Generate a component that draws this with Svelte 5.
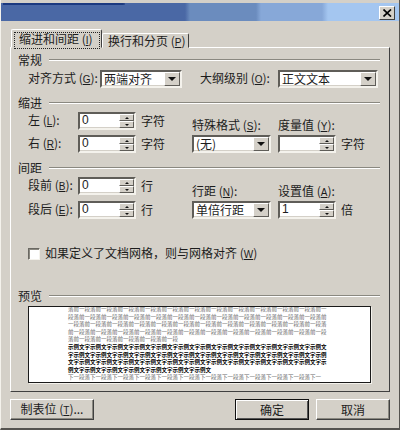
<script>
  const prev = '落前一段' + '落前一段'.repeat(60);
  const sample = '示例文字'.repeat(60);
  const next = '下一段落'.repeat(30);
</script>

{#snippet spin(value)}
  <div class="sunken spinner">
    <span class="value">{value}</span>
    <span class="arrows">
      <span class="arrow"><i class="up"></i></span>
      <span class="arrow"><i class="down"></i></span>
    </span>
  </div>
{/snippet}

{#snippet pick(value, cls)}
  <div class="sunken select {cls}">
    <span class="value">{value}</span>
    <span class="drop"><i class="down big"></i></span>
  </div>
{/snippet}

<div class="window">
  <div class="titlebar">
    <button class="close" aria-label="关闭">
      <svg width="9" height="8" viewBox="0 0 9 8"><path d="M0.5 0.5 L8 7.5 M8 0.5 L0.5 7.5" stroke="#000" stroke-width="1.7" fill="none"/></svg>
    </button>
  </div>

  <div class="tabs">
    <div class="tab active"><span class="focus">缩进和间距 (<u>I</u>)</span></div>
    <div class="tab">换行和分页 (<u>P</u>)</div>
  </div>

  <div class="panel">
    <div class="legend first"><span>常规</span><hr /></div>
    <div class="row general">
      <span class="lab w72">对齐方式 (<u>G</u>):</span>
      {@render pick('两端对齐', 'w82')}
      <span class="lab outline">大纲级别 (<u>O</u>):</span>
      {@render pick('正文文本', 'w100')}
    </div>

    <div class="legend"><span>缩进</span><hr /></div>
    <div class="group">
      <div class="left">
        <div class="row"><span class="lab w50">左 (<u>L</u>):</span>{@render spin('0')}<span class="suffix">字符</span></div>
        <div class="row"><span class="lab w50">右 (<u>R</u>):</span>{@render spin('0')}<span class="suffix">字符</span></div>
      </div>
      <div class="right">
        <div class="field">
          <span class="cap">特殊格式 (<u>S</u>):</span>
          {@render pick('(无)', 'w79')}
        </div>
        <div class="field">
          <span class="cap">度量值 (<u>Y</u>):</span>
          <div class="row">{@render spin('')}<span class="suffix">字符</span></div>
        </div>
      </div>
    </div>

    <div class="legend"><span>间距</span><hr /></div>
    <div class="group">
      <div class="left wide">
        <div class="row"><span class="lab w50">段前 (<u>B</u>):</span>{@render spin('0')}<span class="suffix">行</span></div>
        <div class="row"><span class="lab w50">段后 (<u>E</u>):</span>{@render spin('0')}<span class="suffix">行</span></div>
      </div>
      <div class="right">
        <div class="field">
          <span class="cap">行距 (<u>N</u>):</span>
          {@render pick('单倍行距', 'w79')}
        </div>
        <div class="field">
          <span class="cap">设置值 (<u>A</u>):</span>
          <div class="row">{@render spin('1')}<span class="suffix">倍</span></div>
        </div>
      </div>
    </div>

    <div class="check">
      <span class="box"></span>
      <span>如果定义了文档网格，则与网格对齐 (<u>W</u>)</span>
    </div>

    <div class="legend preview-legend"><span>预览</span><hr /></div>
    <div class="preview">
      <div class="sheet">
        <p class="grey">{prev.slice(0, 208)}</p>
        <p class="bold">{sample.slice(0, 167)}</p>
        <p class="grey">{next.slice(0, 46)}</p>
      </div>
    </div>
  </div>

  <div class="buttons">
    <button class="btn tabstop">制表位 (<u>T</u>)...</button>
    <span class="spacer"></span>
    <button class="btn default">确定</button>
    <button class="btn cancel">取消</button>
  </div>
</div>

<style>
  :global(body) {
    margin: 0;
    background: #d4d0c8;
  }
  .window {
    width: 400px;
    height: 430px;
    box-sizing: border-box;
    background: #d4d0c8;
    border-left: 1px solid #f4f2ec;
    border-right: 1px solid #55534f;
    border-bottom: 2px solid #55534f;
    padding-top: 3px;
    font-family: "Noto Sans CJK SC", "Liberation Sans", sans-serif;
    font-size: 12px;
    line-height: 14px;
    color: #1c1c1c;
    overflow: hidden;
  }
  u {
    font-family: "Liberation Sans", sans-serif;
    font-size: 10px;
  }
  .titlebar {
    height: 18px;
    margin-left: -1px;
    margin-right: -1px;
    background:
      linear-gradient(90deg, #1c3a80 0, #1c3a80 120px, #4a68a5 124px) no-repeat 3px 0 / 122px 2px,
      linear-gradient(90deg, #4a68a5 0, #4a68a5 185px, #6b8cbe 190px, #6b8cbe 256px, #87a8d8 261px, #87a8d8 322px, #a4c6f0 328px);
    box-sizing: border-box;
    display: flex;
    justify-content: flex-end;
    align-items: center;
    padding-right: 5px;
  }
  .close {
    width: 16px;
    height: 14px;
    padding: 0;
    margin-top: 1px;
    background: #d4d0c8;
    border: 1px solid;
    border-color: #fff #404040 #404040 #fff;
    display: flex;
    align-items: center;
    justify-content: center;
  }
  .tabs {
    display: flex;
    align-items: flex-end;
    height: 27px;
    padding-left: 10px;
    position: relative;
    z-index: 1;
    margin-bottom: -1px;
  }
  .tab {
    height: 15px;
    width: 87px;
    box-sizing: border-box;
    white-space: nowrap;
    background: #d4d0c8;
    border: 1px solid;
    border-color: #fff #404040 #d4d0c8 #fff;
    border-radius: 2px 2px 0 0;
    padding: 0 0 0 5px;
  }
  .tab.active {
    width: 91px;
    height: 19px;
    padding: 2px 1px 0 2px;
  }
  .focus {
    outline: 1px dotted #222;
    outline-offset: -1px;
    padding: 0 0 1px 5px;
    display: block;
  }
  .panel {
    width: 380px;
    height: 345px;
    margin-left: 9px;
    box-sizing: border-box;
    background: #d4d0c8;
    border: 1px solid;
    border-color: #fff #404040 #404040 #fff;
    padding: 5px 9px 0 7px;
  }
  .legend {
    display: flex;
    align-items: center;
    gap: 7px;
    height: 14px;
    margin-top: 8px;
  }
  .legend.first {
    margin-top: 0;
  }
  .legend hr {
    flex: 1;
    height: 0;
    margin: 0;
    border: 0;
    border-top: 1px solid #8a8880;
    border-bottom: 1px solid #fff;
  }
  .row {
    display: flex;
    align-items: center;
  }
  .general {
    margin: 3px 0 0 10px;
  }
  .lab {
    white-space: nowrap;
  }
  .w72 { width: 72px; }
  .w50 { width: 50px; }
  .outline {
    width: 78px;
    margin-left: 18px;
  }
  .group {
    display: flex;
    margin: 2px 0 0 10px;
  }
  .left {
    width: 164px;
    display: flex;
    flex-direction: column;
    gap: 5px;
  }
  .left.wide {
    gap: 6px;
  }
  .right {
    display: flex;
    gap: 7px;
    align-items: flex-end;
  }
  .field {
    display: flex;
    flex-direction: column;
    gap: 1px;
  }
  .cap {
    white-space: nowrap;
    font-size: 12px;
  }
  .suffix {
    margin-left: 5px;
    white-space: nowrap;
  }
  .sunken {
    box-sizing: border-box;
    height: 18px;
    display: flex;
    align-items: stretch;
    background: #fff;
    border: 2px solid;
    border-color: #5f5d58 #f4f2ec #f4f2ec #5f5d58;
    box-shadow: inset -1px -1px 0 #d4d0c8;
  }
  .value {
    flex: 1;
    padding-left: 2px;
    line-height: 13px;
    white-space: nowrap;
    font-family: "Liberation Sans", "Noto Sans CJK SC", sans-serif;
    font-size: 12px;
  }
  .select .value {
    font-family: "Noto Sans CJK SC", sans-serif;
  }
  .spinner { width: 58px; }
  .w82 { width: 82px; }
  .w100 { width: 100px; }
  .w79 { width: 79px; }
  .arrows {
    width: 15px;
    display: flex;
    flex-direction: column;
  }
  .arrow {
    flex: 1;
    box-sizing: border-box;
    background: #d4d0c8;
    border: 1px solid;
    border-color: #fff #5f5d58 #5f5d58 #fff;
    display: flex;
    align-items: center;
    justify-content: center;
  }
  .drop {
    width: 16px;
    box-sizing: border-box;
    background: #d4d0c8;
    border: 1px solid;
    border-color: #fff #5f5d58 #5f5d58 #fff;
    display: flex;
    align-items: center;
    justify-content: center;
  }
  i {
    display: block;
    width: 0;
    height: 0;
    border-left: 2px solid transparent;
    border-right: 2px solid transparent;
  }
  i.up { border-bottom: 2px solid #111; }
  i.down { border-top: 2px solid #111; }
  i.big {
    border-left-width: 4px;
    border-right-width: 4px;
    border-top-width: 4px;
  }
  .check {
    display: flex;
    align-items: center;
    gap: 5px;
    margin: 27px 0 0 10px;
    white-space: nowrap;
  }
  .box {
    width: 12px;
    height: 12px;
    box-sizing: border-box;
    background: #fff;
    border: 1px solid;
    border-color: #6a6862 #f4f2ec #f4f2ec #6a6862;
    box-shadow: inset 1px 1px 0 #8a8880;
  }
  .preview-legend {
    margin-top: 27px;
  }
  .preview {
    width: 343px;
    height: 77px;
    margin: 3px 0 0 10px;
    box-sizing: border-box;
    background: #fff;
    border: 1px solid #1a1a1a;
    box-shadow: 1px 1px 0 #f4f2ec;
    overflow: hidden;
  }
  .sheet {
    width: 260px;
    margin: -1px 0 0 39px;
    font-size: 5.5px;
    line-height: 7.6px;
    word-break: break-all;
  }
  .sheet p { margin: 0; }
  .grey { color: #6a6a6a; }
  .bold { color: #000; font-weight: 700; }
  .buttons {
    display: flex;
    padding: 7px 0 0 9px;
    gap: 7px;
    width: 380px;
  }
  .spacer { flex: 1; }
  .btn {
    height: 21px;
    padding: 0;
    font: inherit;
    color: inherit;
    background: #d4d0c8;
    border: 1px solid;
    border-color: #fff #404040 #404040 #fff;
    box-shadow: inset -1px -1px 0 #8a8880;
  }
  .tabstop { width: 84px; }
  .default {
    width: 74px;
    border: 1px solid #111;
    box-shadow: inset 1px 1px 0 #fff, inset -1px -1px 0 #555;
  }
  .cancel { width: 74px; }
</style>
